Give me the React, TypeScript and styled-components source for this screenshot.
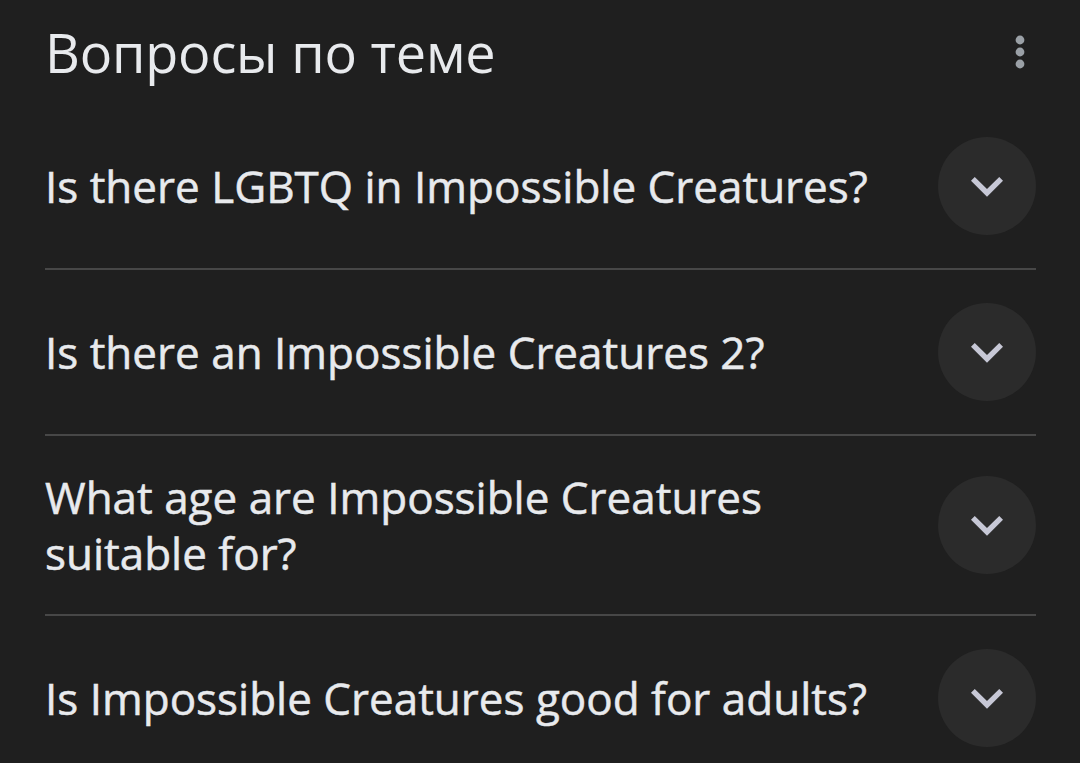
import * as React from "react";
import styled, { createGlobalStyle } from "styled-components";

const GlobalStyle = createGlobalStyle`
  html, body {
    margin: 0;
    padding: 0;
    background: #1f1f1f;
  }
  body {
    font-family: "Open Sans", "Noto Sans", sans-serif;
    color: #e8eaed;
  }
`;

const Page = styled.div`
  width: 1080px;
  height: 763px;
  overflow: hidden;
  background: #1f1f1f;
  box-sizing: border-box;
  padding: 0 44px 0 45px;
`;

const Header = styled.div`
  height: 104px;
  display: flex;
  align-items: center;
  justify-content: space-between;
`;

const Title = styled.h2`
  margin: 0;
  font-size: 54px;
  font-weight: 400;
  letter-spacing: -0.2px;
  color: #e8eaed;
  line-height: 1;
`;

const MenuButton = styled.button`
  width: 48px;
  height: 48px;
  margin-right: -8px;
  padding: 0;
  border: none;
  background: transparent;
  display: flex;
  align-items: center;
  justify-content: center;
  color: #9aa0a6;
`;

const List = styled.div`
  display: flex;
  flex-direction: column;
`;

const Row = styled.div<{ $last?: boolean }>`
  display: flex;
  align-items: center;
  justify-content: space-between;
  gap: 24px;
  padding: 33px 0;
  border-bottom: ${(p) => (p.$last ? "none" : "2px solid #474747")};
`;

const Question = styled.div`
  flex: 1;
  font-size: 44px;
  line-height: 56px;
  font-weight: 400;
  -webkit-text-stroke: 0.5px #e8eaed;
  color: #e8eaed;
`;

const Toggle = styled.button`
  flex: none;
  width: 98px;
  height: 98px;
  border-radius: 50%;
  border: none;
  padding: 0;
  background: #2b2b2b;
  display: flex;
  align-items: center;
  justify-content: center;
  color: #c7c8d6;
`;

const questions = [
  "Is there LGBTQ in Impossible Creatures?",
  "Is there an Impossible Creatures 2?",
  "What age are Impossible Creatures suitable for?",
  "Is Impossible Creatures good for adults?",
];

const MoreIcon = () => (
  <svg width="48" height="48" viewBox="0 0 24 24" fill="currentColor">
    <circle cx="12" cy="6" r="2.2" />
    <circle cx="12" cy="12" r="2.2" />
    <circle cx="12" cy="18" r="2.2" />
  </svg>
);

const ChevronIcon = () => (
  <svg width="64" height="64" viewBox="0 0 24 24" fill="currentColor">
    <path d="M16.59 8.59L12 13.17 7.41 8.59 6 10l6 6 6-6z" />
  </svg>
);

export default function App() {
  return (
    <>
      <GlobalStyle />
      <Page>
        <Header>
          <Title>Вопросы по теме</Title>
          <MenuButton aria-label="Ещё">
            <MoreIcon />
          </MenuButton>
        </Header>
        <List>
          {questions.map((q, i) => (
            <Row key={q} $last={i === questions.length - 1}>
              <Question>{q}</Question>
              <Toggle aria-label="Развернуть">
                <ChevronIcon />
              </Toggle>
            </Row>
          ))}
        </List>
      </Page>
    </>
  );
}
